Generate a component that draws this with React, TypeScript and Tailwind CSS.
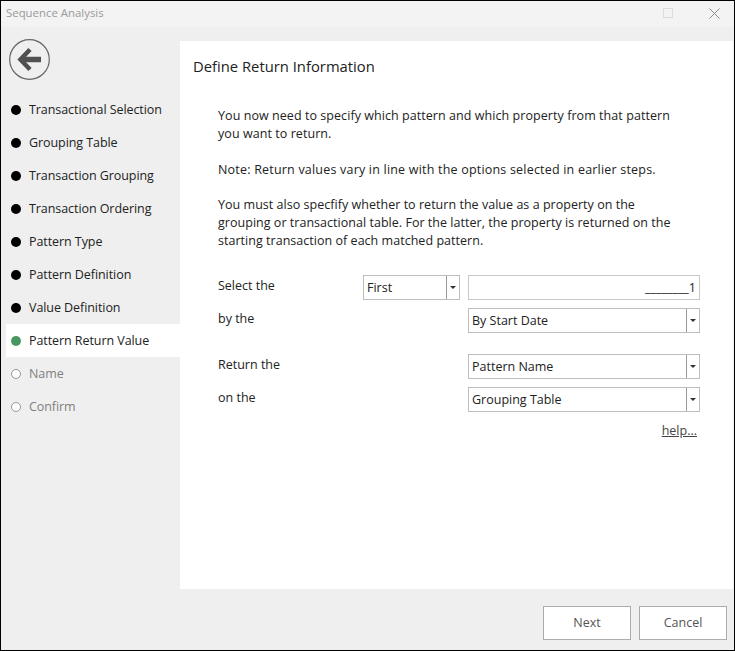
import type { ReactNode } from "react";

const steps = [
  { label: "Transactional Selection", state: "done" },
  { label: "Grouping Table", state: "done" },
  { label: "Transaction Grouping", state: "done" },
  { label: "Transaction Ordering", state: "done" },
  { label: "Pattern Type", state: "done" },
  { label: "Pattern Definition", state: "done" },
  { label: "Value Definition", state: "done" },
  { label: "Pattern Return Value", state: "active" },
  { label: "Name", state: "todo" },
  { label: "Confirm", state: "todo" },
];

function Combo({ value, className }: { value: string; className: string }) {
  return (
    <div className={`flex h-[25px] items-center border border-[#bdbdbd] bg-white ${className}`}>
      <span className="flex-1 pl-[3px] text-[#222]">{value}</span>
      <span className="flex h-full w-[13px] items-center justify-center border-l border-[#9a9a9a]">
        <span className="h-0 w-0 border-x-[3px] border-t-[3px] border-x-transparent border-t-[#333]" />
      </span>
    </div>
  );
}

function FormRow({ label, className, children }: { label: string; className?: string; children: ReactNode }) {
  return (
    <div className={`flex items-start ${className ?? ""}`}>
      <span className="w-[145px] pt-[2px] text-[#222]">{label}</span>
      {children}
    </div>
  );
}

export default function App() {
  return (
    <div className="flex h-[651px] w-[735px] flex-col border border-black bg-[#efefef] font-['Open_Sans',sans-serif] text-[12.5px] leading-[18px]">
      <div className="flex h-[26px] shrink-0 items-center justify-between bg-[#f3f3f3] pb-[2px] pl-[5px] text-[#9a9a9a]">
        <span className="text-[11.4px]">Sequence Analysis</span>
        <div className="flex items-center">
          <span className="mr-[36px] h-[10px] w-[10px] border border-[#dcdcdc]" />
          <svg className="mr-[14px]" width="11" height="11" viewBox="0 0 11 11" fill="none" stroke="#8a8a8a">
            <path d="M0.5 0.5L10.5 10.5M10.5 0.5L0.5 10.5" />
          </svg>
        </div>
      </div>

      <div className="flex min-h-0 flex-1">
        <aside className="w-[179px] shrink-0 pt-[12px]">
          <div className="pb-[12px] pl-[8px]">
            <svg width="42" height="42" viewBox="0 0 42 42" fill="none">
              <circle cx="20.5" cy="20.5" r="19.8" stroke="#666" strokeWidth="1.2" />
              <path d="M32 20.5H14" stroke="#505050" strokeWidth="5.5" />
              <path d="M21 10.5L11.5 20.5L21 30.5" stroke="#505050" strokeWidth="4.5" />
            </svg>
          </div>
          <ul className="pl-[5px]">
            {steps.map((s) => (
              <li
                key={s.label}
                className={`flex h-[33px] items-center pl-[5px] tracking-[-0.07px] ${s.state === "active" ? "bg-white" : ""} ${
                  s.state === "todo" ? "text-[#808080]" : "text-[#222]"
                }`}
              >
                <span
                  className={`mr-[8px] h-[10px] w-[10px] rounded-full ${
                    s.state === "done" ? "bg-black" : s.state === "active" ? "bg-[#4a9660]" : "border-[1.5px] border-[#969696] bg-white"
                  }`}
                />
                {s.label}
              </li>
            ))}
          </ul>
        </aside>

        <main className="mt-[14px] flex-1 self-start">
          <div className="h-[548px] w-[553px] bg-white pl-[13px] pt-[14px]">
            <h1 className="text-[14.8px] leading-[22px] text-[#222]">Define Return Information</h1>
            <div className="ml-[25px] mt-[30px] w-[470px] text-[#222]">
              <p className="tracking-[0.06px]">You now need to specify which pattern and which property from that pattern you want to return.</p>
              <p className="mt-[18px] tracking-[0.2px]">Note: Return values vary in line with the options selected in earlier steps.</p>
              <p className="mt-[17px] tracking-[0.03px]">
                You must also specfify whether to return the value as a property on the grouping or transactional table.
                For the latter, the property is returned on the starting transaction of each matched pattern.
              </p>
              <div className="mt-[25px] w-[482px]">
                <FormRow label="Select the" className="h-[33px]">
                  <Combo value="First" className="w-[97px]" />
                  <div className="ml-[8px] flex h-[25px] w-[232px] items-center justify-end border border-[#c8c8c8] pr-[3px] text-[#222]">
                    ________1
                  </div>
                </FormRow>
                <FormRow label="by the" className="h-[46px]">
                  <Combo value="By Start Date" className="ml-[105px] w-[232px]" />
                </FormRow>
                <FormRow label="Return the" className="h-[33px]">
                  <Combo value="Pattern Name" className="ml-[105px] w-[232px]" />
                </FormRow>
                <FormRow label="on the" className="h-[33px]">
                  <Combo value="Grouping Table" className="ml-[105px] w-[232px]" />
                </FormRow>
              </div>
              <div className="mt-[2px] w-[479px] text-right text-[#444] underline">help...</div>
            </div>
          </div>
        </main>
      </div>

      <div className="flex h-[61px] shrink-0 items-start justify-end gap-[8px] pr-[7px] pt-[17px]">
        <button className="h-[34px] w-[88px] border border-[#acacac] bg-white text-[#555]">Next</button>
        <button className="h-[34px] w-[88px] border border-[#acacac] bg-white text-[#555]">Cancel</button>
      </div>
    </div>
  );
}
